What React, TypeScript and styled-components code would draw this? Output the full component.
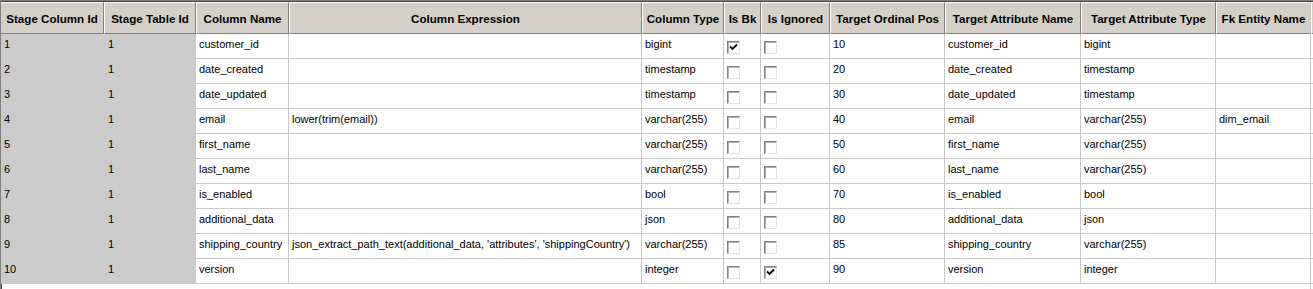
import styled, { createGlobalStyle } from "styled-components";

const GlobalStyle = createGlobalStyle`
  html, body {
    margin: 0;
    padding: 0;
    background: #ffffff;
  }
`;

const COLS = [104, 92, 93, 353, 82, 37, 69, 115, 136, 135, 95];
const gridCols = COLS.map((w) => `${w}px`).join(" ") + " 1fr";

type Row = {
  id: string;
  table: string;
  name: string;
  expr: string;
  type: string;
  bk: boolean;
  ignored: boolean;
  pos: string;
  attrName: string;
  attrType: string;
  fk: string;
};

const rows: Row[] = [
  { id: "1", table: "1", name: "customer_id", expr: "", type: "bigint", bk: true, ignored: false, pos: "10", attrName: "customer_id", attrType: "bigint", fk: "" },
  { id: "2", table: "1", name: "date_created", expr: "", type: "timestamp", bk: false, ignored: false, pos: "20", attrName: "date_created", attrType: "timestamp", fk: "" },
  { id: "3", table: "1", name: "date_updated", expr: "", type: "timestamp", bk: false, ignored: false, pos: "30", attrName: "date_updated", attrType: "timestamp", fk: "" },
  { id: "4", table: "1", name: "email", expr: "lower(trim(email))", type: "varchar(255)", bk: false, ignored: false, pos: "40", attrName: "email", attrType: "varchar(255)", fk: "dim_email" },
  { id: "5", table: "1", name: "first_name", expr: "", type: "varchar(255)", bk: false, ignored: false, pos: "50", attrName: "first_name", attrType: "varchar(255)", fk: "" },
  { id: "6", table: "1", name: "last_name", expr: "", type: "varchar(255)", bk: false, ignored: false, pos: "60", attrName: "last_name", attrType: "varchar(255)", fk: "" },
  { id: "7", table: "1", name: "is_enabled", expr: "", type: "bool", bk: false, ignored: false, pos: "70", attrName: "is_enabled", attrType: "bool", fk: "" },
  { id: "8", table: "1", name: "additional_data", expr: "", type: "json", bk: false, ignored: false, pos: "80", attrName: "additional_data", attrType: "json", fk: "" },
  { id: "9", table: "1", name: "shipping_country", expr: "json_extract_path_text(additional_data, 'attributes', 'shippingCountry')", type: "varchar(255)", bk: false, ignored: false, pos: "85", attrName: "shipping_country", attrType: "varchar(255)", fk: "" },
  { id: "10", table: "1", name: "version", expr: "", type: "integer", bk: false, ignored: true, pos: "90", attrName: "version", attrType: "integer", fk: "" },
];

const headers = [
  "Stage Column Id",
  "Stage Table Id",
  "Column Name",
  "Column Expression",
  "Column Type",
  "Is Bk",
  "Is Ignored",
  "Target Ordinal Pos",
  "Target Attribute Name",
  "Target Attribute Type",
  "Fk Entity Name",
  "",
];

// Styled Components
const Frame = styled.div`
  width: 1313px;
  height: 289px;
  box-sizing: border-box;
  border-top: 1px solid #808080;
  border-left: 1px solid #808080;
  background: #ffffff;
  overflow: hidden;
  font-family: Tahoma, "Liberation Sans", Arial, sans-serif;
  font-size: 11px;
  color: #000000;
`;

const Inner = styled.div`
  height: 100%;
  box-sizing: border-box;
  border-top: 1px solid #404040;
  border-left: 1px solid #404040;
  position: relative;
`;

const Grid = styled.div`
  display: grid;
  grid-template-columns: ${gridCols};
  margin-left: -2px;
`;

const HeaderCell = styled.div`
  height: 32px;
  box-sizing: border-box;
  background: #d4d0c8;
  border-top: 1px solid #ffffff;
  border-left: 1px solid #ffffff;
  border-right: 1px solid #808080;
  border-bottom: 1px solid #808080;
  display: flex;
  align-items: center;
  justify-content: center;
  font-weight: bold;
  font-size: 11.6px;
  white-space: nowrap;
  overflow: hidden;
`;

const Cell = styled.div<{ $fixed?: boolean }>`
  height: 25px;
  box-sizing: border-box;
  background: ${(p) => (p.$fixed ? "#cbcbcb" : "#ffffff")};
  border-right: 1px solid ${(p) => (p.$fixed ? "#cbcbcb" : "#c8c8c8")};
  border-bottom: 1px solid ${(p) => (p.$fixed ? "#cbcbcb" : "#c8c8c8")};
  padding: 0 0 0 ${(p) => (p.$fixed ? 4 : 3)}px;
  line-height: 20px;
  white-space: nowrap;
  overflow: hidden;
`;

const CheckCell = styled(Cell)`
  padding: 7px 0 0 3px;
`;

const Box = styled.span`
  display: block;
  width: 13px;
  height: 13px;
  box-sizing: border-box;
  background: #ffffff;
  border-top: 1px solid #808080;
  border-left: 1px solid #808080;
  border-right: 1px solid #e4e4e4;
  border-bottom: 1px solid #e4e4e4;
  box-shadow: inset 1px 1px 0 #b0b0b0;
  position: relative;

  svg {
    position: absolute;
    left: 1px;
    top: 1px;
  }
`;

const RightEdge = styled.div`
  position: absolute;
  top: 0;
  bottom: 0;
  left: 1308px;
  width: 1px;
  background: #c8c8c8;
`;

function CheckBox({ checked }: { checked: boolean }) {
  return (
    <Box>
      {checked && (
        <svg width="9" height="9" viewBox="0 0 9 9">
          <path d="M1 3.5 L3.5 6 L8 1.5" stroke="#000" strokeWidth="1.8" fill="none" />
        </svg>
      )}
    </Box>
  );
}

function App() {
  return (
    <>
      <GlobalStyle />
      <Frame>
        <Inner>
          <RightEdge />
          <Grid>
            {headers.map((h, i) => (
              <HeaderCell key={i}>{h}</HeaderCell>
            ))}
            {rows.map((r) => [
              <Cell key={r.id + "a"} $fixed>{r.id}</Cell>,
              <Cell key={r.id + "b"} $fixed>{r.table}</Cell>,
              <Cell key={r.id + "c"}>{r.name}</Cell>,
              <Cell key={r.id + "d"}>{r.expr}</Cell>,
              <Cell key={r.id + "e"}>{r.type}</Cell>,
              <CheckCell key={r.id + "f"}>
                <CheckBox checked={r.bk} />
              </CheckCell>,
              <CheckCell key={r.id + "g"}>
                <CheckBox checked={r.ignored} />
              </CheckCell>,
              <Cell key={r.id + "h"}>{r.pos}</Cell>,
              <Cell key={r.id + "i"}>{r.attrName}</Cell>,
              <Cell key={r.id + "j"}>{r.attrType}</Cell>,
              <Cell key={r.id + "k"}>{r.fk}</Cell>,
              <Cell key={r.id + "l"} />,
            ])}
          </Grid>
        </Inner>
      </Frame>
    </>
  );
}

export default App;
